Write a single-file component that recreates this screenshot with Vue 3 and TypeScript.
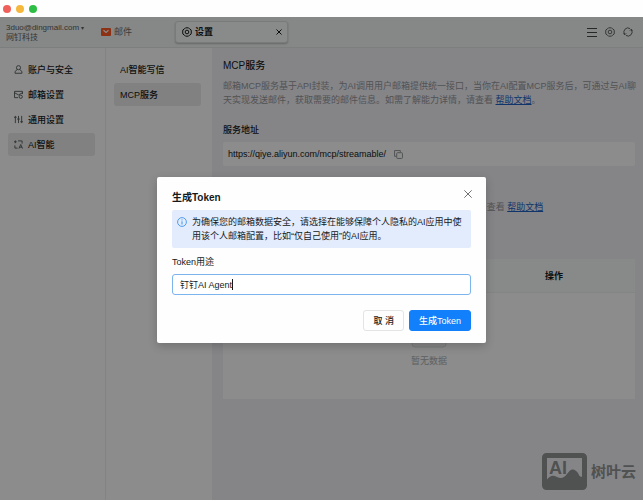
<script setup lang="ts">
import { ref, onMounted } from 'vue'

interface NavItem {
  id: string
  label: string
}

const navItems: NavItem[] = [
  { id: 'account', label: '账户与安全' },
  { id: 'mailbox', label: '邮箱设置' },
  { id: 'general', label: '通用设置' },
  { id: 'ai', label: 'AI智能' },
]
const subItems: NavItem[] = [
  { id: 'write', label: 'AI智能写信' },
  { id: 'mcp', label: 'MCP服务' },
]

const activeNav = ref('ai')
const activeSub = ref('mcp')
const purpose = ref('钉钉AI Agent')
const serviceUrl = 'https://qiye.aliyun.com/mcp/streamable/'
const field = ref<HTMLInputElement | null>(null)

onMounted(() => field.value?.focus())
</script>

<template>
  <div class="window">
    <div class="titlebar">
      <i class="light red"></i>
      <i class="light yellow"></i>
      <i class="light green"></i>
    </div>

    <header class="topbar">
      <button class="account" type="button">
        <span>3duo@dingmail.com <small>▾</small></span>
        <span>网钉科技</span>
      </button>
      <button class="tab" type="button">
        <svg width="10" height="8" viewBox="0 0 10 8">
          <rect width="10" height="8" rx="1" fill="#ff5a24" />
          <path d="M2.500 2.300 5 4.400 7.500 2.300" fill="none" stroke="#fff" stroke-width="1.200" />
        </svg>
        邮件
      </button>
      <div class="tab current">
        <svg class="line" width="10" height="10" viewBox="0 0 12 12">
          <path d="M4.200 1h3.600L9 2.200l1.900 1.300.3 2.500-.3 2.500L9 9.800 7.800 11H4.200L3 9.800 1.100 8.500.8 6l.3-2.500L3 2.200z" />
          <circle cx="6" cy="6" r="2.200" />
        </svg>
        <span>设置</span>
        <button class="plain" type="button" aria-label="关闭标签">
          <svg class="line thin" width="6" height="6" viewBox="0 0 6 6"><path d="M.5.5l5 5M5.500.5l-5 5" /></svg>
        </button>
      </div>
      <div class="tools">
        <button class="plain" type="button" aria-label="菜单">
          <svg class="line thin" width="10" height="10" viewBox="0 0 10 10"><path d="M0 1.500h10M0 5.500h10M0 9.500h10" /></svg>
        </button>
        <button class="plain" type="button" aria-label="设置">
          <svg class="line thin" width="10" height="10" viewBox="0 0 12 12">
            <path d="M4.200 1h3.600L9 2.200l1.900 1.300.3 2.500-.3 2.500L9 9.800 7.800 11H4.200L3 9.800 1.100 8.500.8 6l.3-2.500L3 2.200z" />
            <circle cx="6" cy="6" r="2.200" />
          </svg>
        </button>
        <button class="plain" type="button" aria-label="刷新">
          <svg class="line thin" width="10" height="10" viewBox="0 0 12 12">
            <path d="M2.200 9A4.800 4.800 0 0 1 8.500 1.900M9.800 3A4.800 4.800 0 0 1 3.500 10.100M.4 7.800 2.200 9.200 3.800 7.600M11.600 4.200 9.800 2.800 8.200 4.400" />
          </svg>
        </button>
      </div>
    </header>

    <div class="body">
      <nav class="side">
        <button
          v-for="item in navItems"
          :key="item.id"
          type="button"
          class="nav-item"
          :class="{ active: item.id === activeNav }"
          @click="activeNav = item.id"
        >
          <svg class="line thin" width="9" height="9" viewBox="0 0 10 10">
            <template v-if="item.id === 'account'">
              <circle cx="5" cy="3" r="2.300" />
              <path d="M3.600 5 1.200 7.200V9.200H8.800V7.200L6.400 5" />
            </template>
            <template v-else-if="item.id === 'mailbox'">
              <path d="M4.500 8.500H.6V1.500H9.400V4.500M.6 3 5 5.500 9.400 3" />
              <circle cx="7.500" cy="7.500" r="1.800" />
            </template>
            <path v-else-if="item.id === 'general'" d="M1.500 1v8M0 2.500h3M5 1v8M3.500 4.500h3M8.500 1v8M7 7.500h3" />
            <path v-else d="M1.500.5v3M0 2h3M4.500 1H9V4M1 6V9H4M5.500 9.500 7.500 5l2 4.500M6.200 8h2.600" />
          </svg>
          {{ item.label }}
        </button>
      </nav>

      <nav class="side sub">
        <button
          v-for="item in subItems"
          :key="item.id"
          type="button"
          class="nav-item"
          :class="{ active: item.id === activeSub }"
          @click="activeSub = item.id"
        >
          {{ item.label }}
        </button>
      </nav>

      <main class="content">
        <h1>MCP服务</h1>
        <p class="desc">
          邮箱MCP服务基于API封装，为AI调用用户邮箱提供统一接口，当你在AI配置MCP服务后，可通过与AI聊<br />天实现发送邮件，获取需要的邮件信息。如需了解能力详情，请查看
          <a href="#help">帮助文档</a>。
        </p>
        <h2>服务地址</h2>
        <div class="url">
          <span>{{ serviceUrl }}</span>
          <button class="plain copy" type="button" aria-label="复制">
            <svg class="line thin" width="9" height="9" viewBox="0 0 10 10">
              <path d="M2.500 7H.6V.6H7V2.500" />
              <rect x="3" y="3" width="6.400" height="6.400" rx="1" />
            </svg>
          </button>
        </div>
        <p class="desc hint">查看 <a href="#help">帮助文档</a></p>
        <table>
          <thead>
            <tr>
              <th></th>
              <th class="action">操作</th>
            </tr>
          </thead>
          <tbody>
            <tr>
              <td colspan="2">
                <svg width="36" height="26" viewBox="0 0 36 26">
                  <path d="M1 8h10l3 4h8l3-4h10v14a3 3 0 0 1-3 3H4a3 3 0 0 1-3-3z" fill="#f4f5f5" stroke="#dcdcde" />
                </svg>
                <span>暂无数据</span>
              </td>
            </tr>
          </tbody>
        </table>
      </main>
    </div>

    <div class="mask">
      <form class="dialog" role="dialog" aria-labelledby="dialog-title" @submit.prevent>
        <div class="dialog-head">
          <h3 id="dialog-title">生成Token</h3>
          <button class="plain" type="button" aria-label="关闭">
            <svg class="line thin" width="8" height="8" viewBox="0 0 8 8"><path d="M.3.3l7.400 7.400M7.700.3.3 7.700" /></svg>
          </button>
        </div>
        <div class="notice">
          <svg width="10" height="10" viewBox="0 0 10 10">
            <circle cx="5" cy="5" r="4.400" fill="none" stroke="#3f93ee" stroke-width=".9" />
            <path d="M5 4.300V7.500M5 2.400v1" stroke="#3f93ee" />
          </svg>
          <p>为确保您的邮箱数据安全，请选择在能够保障个人隐私的AI应用中使用该个人邮箱配置，比如“仅自己使用”的AI应用。</p>
        </div>
        <label for="purpose">Token用途</label>
        <div class="field">
          <input id="purpose" ref="field" v-model="purpose" type="text" autocomplete="off" />
          <i class="caret"></i>
        </div>
        <div class="actions">
          <button class="btn" type="button">取 消</button>
          <button class="btn primary" type="submit">生成Token</button>
        </div>
      </form>
    </div>

    <div class="watermark">
      <svg width="45" height="37" viewBox="0 0 45 37">
        <rect x="2.500" y="2.500" width="40" height="32" rx="2" fill="none" stroke="currentColor" stroke-width="5" />
        <path d="M4 28C8 22 11 22 15 24S22 25 25 21 30 15 34 18 36 24 41 24V34H4z" fill="currentColor" />
        <text x="7" y="21" font-size="18" font-weight="700" fill="currentColor">AI</text>
      </svg>
      <span>树叶云</span>
    </div>
  </div>
</template>

<style>
body {
  margin: 0;
}
</style>

<style scoped>
.window {
  position: relative;
  display: flex;
  flex-direction: column;
  min-height: 100vh;
  background: #fdfffe;
  color: #16191b;
  font: 9px/14px "Liberation Sans", "Noto Sans CJK SC", sans-serif;
}
* {
  box-sizing: border-box;
}
button,
input {
  font: inherit;
  color: inherit;
}
button {
  border: 0;
  padding: 0;
  background: none;
  cursor: pointer;
}
h1,
h2,
h3,
p {
  margin: 0;
}
svg {
  flex: none;
}
.line {
  display: block;
  fill: none;
  stroke: currentColor;
  stroke-width: 1.2;
}
.thin {
  stroke-width: 1;
}
.titlebar {
  display: flex;
  align-items: center;
  gap: 5px;
  height: 17px;
  padding-left: 3px;
  background: #fefefe;
}
.light {
  width: 8px;
  height: 8px;
  border-radius: 50%;
}
.red {
  background: #f0605a;
}
.yellow {
  background: #f5b83d;
}
.green {
  background: #2fbe45;
}
.topbar {
  display: flex;
  align-items: center;
  height: 31px;
  padding-right: 10px;
  background: #f5f8f7;
  border-bottom: 1px solid #e4e6e6;
}
.account {
  display: flex;
  flex-direction: column;
  width: 101px;
  padding-left: 6px;
  font-size: 8px;
  line-height: 9px;
  text-align: left;
  color: #5c5f60;
  white-space: nowrap;
}
.account small {
  font-size: 6px;
}
.tab {
  display: flex;
  align-items: center;
  gap: 3px;
  width: 74px;
  color: #6c6f70;
}
.current {
  width: 113px;
  height: 22px;
  padding: 0 5px 0 6px;
  border: 1px solid #dde0df;
  border-radius: 3px;
  background: #fafcfb;
  box-shadow: 0 1px 2px #00000040;
  color: #16191b;
  font-weight: 700;
}
.current .plain {
  margin-left: auto;
}
.tools {
  display: flex;
  gap: 8px;
  margin-left: auto;
  color: #45494a;
}
.body {
  display: flex;
  flex: 1;
}
.side {
  display: flex;
  flex: none;
  flex-direction: column;
  gap: 2px;
  width: 106px;
  padding: 10px 10px 0 8px;
  border-right: 1px solid #eeefef;
}
.sub {
  border-right-color: transparent;
}
.nav-item {
  display: flex;
  align-items: center;
  gap: 5px;
  height: 23px;
  padding: 0 6px;
  border-radius: 3px;
  font-weight: 500;
}
.nav-item svg {
  color: #55595a;
}
.active {
  background: #e9ebea;
}
.content {
  flex: 1;
  min-width: 0;
  padding: 11px 8px 0 11px;
  background: #f2f2f7;
}
h1 {
  font-size: 10px;
  font-weight: 500;
}
.desc {
  margin-top: 6px;
  color: #96979b;
  white-space: nowrap;
}
a {
  color: #1c62c4;
  text-decoration: underline;
}
h2 {
  margin: 16px 0 5px;
  font-size: 9px;
  font-weight: 500;
}
.url {
  display: flex;
  align-items: center;
  gap: 8px;
  height: 24px;
  padding: 0 5px;
  border-radius: 2px;
  background: #fdfffe;
}
.copy {
  color: #8b8d8e;
}
.hint {
  margin-top: 34px;
  padding-left: 64%;
}
table {
  width: 100%;
  margin-top: 45px;
  border-spacing: 0;
  background: #fdfffe;
}
th {
  height: 34px;
  padding: 0;
  background: #f8faf9;
  border-bottom: 1px solid #eff1f0;
  font-weight: 700;
}
.action {
  width: 162px;
}
td {
  height: 106px;
  padding: 29px 0 0;
  vertical-align: top;
  text-align: center;
  color: #adafb0;
}
td svg,
td span {
  display: block;
  margin: 0 auto;
}
td span {
  margin-top: 6px;
}
.mask {
  position: absolute;
  inset: 17px 0 0;
  display: flex;
  align-items: center;
  justify-content: center;
  padding-top: 3px;
  background: #00000073;
}
.dialog {
  width: 329px;
  padding: 13px 15px 12px;
  border-radius: 2px;
  background: #fefefe;
  box-shadow: 0 3px 10px #00000033;
}
.dialog-head {
  display: flex;
  align-items: flex-start;
  justify-content: space-between;
  margin-right: -1px;
}
.dialog-head .plain {
  color: #707375;
}
h3 {
  font-size: 10px;
  line-height: 16px;
  font-weight: 700;
}
.notice {
  display: flex;
  align-items: flex-start;
  gap: 5px;
  margin-top: 4px;
  padding: 5px 8px 5px 5px;
  border-radius: 2px;
  background: #e3ecfc;
}
.notice svg {
  margin-top: 2px;
}
.notice p {
  flex: 1;
}
label {
  display: block;
  margin: 7px 0 5px;
}
.field {
  display: flex;
  align-items: center;
  height: 21px;
  padding: 0 7px;
  border: 1px solid #7cb4ee;
  border-radius: 3px;
  background: #fff;
}
.field input {
  field-sizing: content;
  max-width: 100%;
  padding: 0;
  border: 0;
  background: none;
  outline: 0;
  caret-color: transparent;
}
.caret {
  width: 1px;
  height: 11px;
  background: #16191b;
}
.actions {
  display: flex;
  justify-content: flex-end;
  gap: 5px;
  margin-top: 15px;
}
.btn {
  height: 21px;
  padding: 0 9px;
  border: 1px solid #e2e4e6;
  border-radius: 3px;
  font-weight: 500;
}
.primary {
  border-color: #127ffb;
  background: #127ffb;
  color: #fff;
}
.watermark {
  position: absolute;
  z-index: 2;
  right: 7px;
  bottom: 10px;
  display: flex;
  align-items: center;
  gap: 4px;
  color: #505151;
  font-size: 15px;
  font-weight: 700;
}
</style>
